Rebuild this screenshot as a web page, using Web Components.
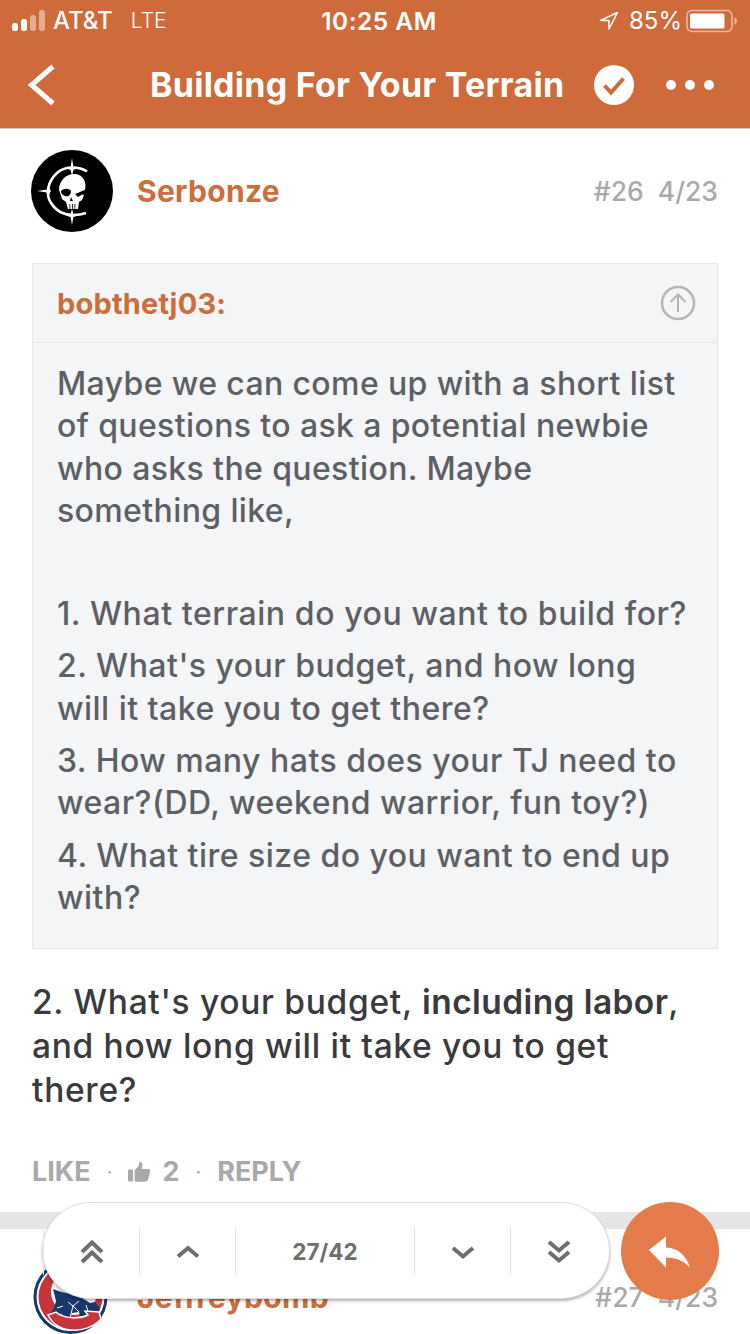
<!DOCTYPE html>
<html>
<head>
<meta charset="utf-8">
<title>Building For Your Terrain</title>
<style>
  html, body { margin: 0; padding: 0; background: #fff; }
  body { font-family: Inter, "Liberation Sans", sans-serif; }
</style>
</head>
<body>

<topic-screen>
  <topic-header slot="header" title="Building For Your Terrain"></topic-header>

  <forum-post name="Serbonze" number="#26" date="4/23">
    <skull-avatar slot="avatar"></skull-avatar>
    <post-quote user="bobthetj03:">
      <p class="intro">Maybe we can come up with a short list of questions to ask a potential newbie who asks the question. Maybe something like,</p>
      <p class="first">1. What terrain do you want to build for?</p>
      <p>2. What's your budget, and how long will it take you to get there?</p>
      <p>3. How many hats does your TJ need to wear?(DD, weekend warrior, fun toy?)</p>
      <p>4. What tire size do you want to end up with?</p>
    </post-quote>
    <post-text>2. What's your budget, <b>including labor</b>, <span>and how long will it take you to get there?</span></post-text>
    <post-actions likes="2"></post-actions>
  </forum-post>

  <forum-post class="next" name="Jeffreybomb" number="#27" date="4/23">
    <cubs-avatar slot="avatar"></cubs-avatar>
  </forum-post>

  <topic-progress slot="overlay" current="27/42"></topic-progress>
  <reply-fab slot="overlay"></reply-fab>
</topic-screen>

<script>
class TopicScreen extends HTMLElement {
  constructor() {
    super();
    this.attachShadow({ mode: "open" });
    this.shadowRoot.innerHTML = `
      <style>
        :host {
          display: block;
          position: relative;
          width: 750px;
          height: 1334px;
          overflow: hidden;
          background: #fff;
        }
        .overlay {
          position: absolute;
          left: 42px;
          top: 1202px;
          display: flex;
          gap: 11px;
        }
      </style>
      <slot name="header"></slot>
      <slot></slot>
      <div class="overlay"><slot name="overlay"></slot></div>
    `;
  }
}

class TopicHeader extends HTMLElement {
  constructor() {
    super();
    this.attachShadow({ mode: "open" });
  }

  connectedCallback() {
    const title = this.getAttribute("title") || "";
    this.shadowRoot.innerHTML = `
      <style>
        :host {
          display: block;
          height: 128px;
          background: #cf6a3b;
          border-bottom: 1px solid #c9c9c9;
          color: #fff;
          font-family: Inter, "Liberation Sans", sans-serif;
        }
        .status {
          display: grid;
          grid-template-columns: 1fr auto 1fr;
          align-items: center;
          height: 41px;
          padding: 0 12px;
          font-size: 24px;
        }
        .left, .right { display: flex; align-items: center; }
        .right { justify-content: flex-end; }
        .carrier { margin-left: 8px; font-weight: 500; }
        .lte { margin-left: 18px; font-size: 21px; font-weight: 300; }
        .time { margin-left: 8px; font-size: 24.500px; font-weight: 600; letter-spacing: .5px; }
        .pct { margin: 0 4px 0 10px; font-weight: 400; }
        .nav {
          display: flex;
          align-items: center;
          height: 87px;
          padding-left: 28px;
        }
        h1 {
          margin: 0 0 0 93px;
          font-size: 34px;
          font-weight: 700;
          white-space: nowrap;
          letter-spacing: .25px;
        }
        .check { margin-left: 30px; }
        .dots { margin-left: 31px; }
        svg { display: block; flex: none; }
      </style>
      <div class="status">
        <div class="left">
          <svg width="33" height="22" viewBox="0 0 33 22" fill="#fff">
            <rect x="0" y="13" width="6" height="8" rx="2.500"/>
            <rect x="9" y="9" width="6" height="12" rx="2.500"/>
            <rect x="18" y="5" width="6" height="16" rx="2.500" opacity=".45"/>
            <rect x="27" y="0" width="6" height="21" rx="2.500" opacity=".45"/>
          </svg>
          <span class="carrier">AT&amp;T</span>
          <span class="lte">LTE</span>
        </div>
        <div class="time">10:25 AM</div>
        <div class="right">
          <svg width="20" height="20" viewBox="0 0 20 20" fill="none" stroke="#fff" stroke-width="1.600" stroke-linejoin="round">
            <path d="M18.500 1.500 1.500 9.500h8.500v8.500z"/>
          </svg>
          <span class="pct">85%</span>
          <svg width="52" height="24" viewBox="0 0 52 24">
            <rect x="1" y="1.500" width="45" height="21" rx="5" fill="none" stroke="#fff" stroke-opacity=".55" stroke-width="1.500"/>
            <rect x="4" y="4.500" width="34.500" height="15" rx="1.500" fill="#fff"/>
            <path d="M48.500 8.500c1.600.4 2.500 1.800 2.500 3.500s-.9 3.100-2.500 3.500z" fill="#fff" fill-opacity=".55"/>
          </svg>
        </div>
      </div>
      <div class="nav">
        <svg width="29" height="42" viewBox="0 0 29 42" fill="none" stroke="#fff" stroke-width="5">
          <path d="M25 2.500 3.500 21 25 39.500"/>
        </svg>
        <h1>${title}</h1>
        <svg class="check" width="40" height="40" viewBox="0 0 40 40">
          <circle cx="20" cy="20" r="20" fill="#fff"/>
          <path d="M10.500 20.500 17 27.500 29.500 13.500" fill="none" stroke="#cf6a3b" stroke-width="4"/>
        </svg>
        <svg class="dots" width="50" height="12" viewBox="0 0 50 12" fill="#fff">
          <circle cx="6" cy="6" r="5"/>
          <circle cx="25" cy="6" r="5"/>
          <circle cx="44" cy="6" r="5"/>
        </svg>
      </div>
    `;
  }
}

class ForumPost extends HTMLElement {
  constructor() {
    super();
    this.attachShadow({ mode: "open" });
  }

  connectedCallback() {
    this.shadowRoot.innerHTML = `
      <style>
        :host {
          display: block;
          padding: 21px 32px 0;
          font-family: Inter, "Liberation Sans", sans-serif;
        }
        :host(.next) {
          border-top: 17px solid #e6e6e6;
          padding-top: 27px;
        }
        .head {
          display: flex;
          align-items: center;
          height: 82px;
        }
        .name {
          margin-left: 23px;
          color: #cc6d3c;
          font-size: 30px;
          font-weight: 700;
          letter-spacing: .3px;
        }
        .meta {
          margin-left: auto;
          color: #a9a9a9;
          font-size: 26.500px;
          font-weight: 500;
          white-space: pre;
        }
      </style>
      <div class="head">
        <slot name="avatar"></slot>
        <span class="name">${this.getAttribute("name")}</span>
        <span class="meta">${this.getAttribute("number")}  ${this.getAttribute("date")}</span>
      </div>
      <slot></slot>
    `;
  }
}

class SkullAvatar extends HTMLElement {
  constructor() {
    super();
    this.attachShadow({ mode: "open" });
    this.shadowRoot.innerHTML = `
      <style>
        :host { display: block; width: 82px; height: 82px; flex: none; margin: 0 1px 0 -1px; }
        svg { display: block; }
      </style>
      <svg width="82" height="82" viewBox="0 0 82 82">
        <circle cx="41" cy="41" r="41" fill="#000"/>
        <path d="M56 21.500C49 17 35 15 26 23 17 31 14 44 20 53c5 8 13 12 22 12 5 0 9-.5 13-2" fill="none" stroke="#fff" stroke-width="2.600"/>
        <path d="M41 8l1.400 9 4 1.500-4 1.500L41 26l-1.400-6-4-1.500 4-1.500z" fill="#fff"/>
        <path d="M6 41l10-1.400 1.500-4 1.500 4 1 1.400-1 1.400-1.500 4-1.500-4z" fill="#fff"/>
        <path d="M41 75l-1.400-8-5-1.500 5-1.500L41 59l1.400 5 5 1.500-5 1.500z" fill="#fff"/>
        <path d="M28 40C28 30 36 23 45 24 52 25 56 32 54 40L48 43 53 45 51 50 48 52 47 59H37L35 52 31 49Z" fill="#fff"/>
        <path d="M30 41C33 38 38 38 40 41 40 45 37 47 34 46 32 45 30 44 30 41Z" fill="#000"/>
        <path d="M44 44 54 40 52 44 47 47Z" fill="#000"/>
        <path d="M40 47l2 4h-3z" fill="#000"/>
        <path d="M38.500 54h.8v5h-.8zM41 54h.8v5h-.8zM43.500 54h.8v5h-.8z" fill="#000"/>
      </svg>
    `;
  }
}

class CubsAvatar extends HTMLElement {
  constructor() {
    super();
    this.attachShadow({ mode: "open" });
    this.shadowRoot.innerHTML = `
      <style>
        :host { display: block; width: 82px; height: 82px; flex: none; }
        svg { display: block; overflow: visible; }
      </style>
      <svg width="82" height="82" viewBox="0 0 82 82">
        <g transform="translate(0 2)">
          <circle cx="38.500" cy="39" r="37" fill="#16386a"/>
          <circle cx="38.500" cy="39" r="34" fill="#fff"/>
          <circle cx="38.500" cy="39" r="32" fill="#c8343c"/>
          <circle cx="42" cy="34" r="23" fill="#fff"/>
          <path d="M21 31C26 33 33 35 38 36L50 40 58 45 63 44 68 50 66 54 59 55 54 59 48 58 47 54 40 55 38 60 31 60 30 55 23 57 17 58 22 50 24 43Z" fill="#16386a"/>
          <path d="M36 44 41 48 38 60M47 43 41 48 47 54M54 47 56 53M25 50 31 48" fill="none" stroke="#fff" stroke-width="1"/>
          <path d="M16 57 24 54C30 60 46 62 56 57L53 53 67 54 69 61C62 69 50 73 39 72 28 71 20 65 16 57Z" fill="#c8343c" stroke="#fff" stroke-width="1.500"/>
        </g>
      </svg>
    `;
  }
}

class PostQuote extends HTMLElement {
  constructor() {
    super();
    this.attachShadow({ mode: "open" });
  }

  connectedCallback() {
    this.shadowRoot.innerHTML = `
      <style>
        :host {
          display: block;
          margin-top: 31px;
          background: #f4f5f7;
          border: 1px solid #e6e7e9;
          font-family: Inter, "Liberation Sans", sans-serif;
        }
        .title {
          display: flex;
          align-items: center;
          justify-content: space-between;
          height: 78px;
          padding: 0 21px 0 24px;
          border-bottom: 1px solid #e6e7e9;
          color: #cc6d3c;
          font-size: 29px;
          font-weight: 700;
          letter-spacing: .2px;
        }
        .body {
          padding: 20px 28px 28.500px 24px;
          color: #5c5f63;
          font-size: 32px;
          font-weight: 500;
          letter-spacing: .48px;
          line-height: 42.300px;
        }
        svg { display: block; }
        ::slotted(p) { margin: 10px 0 0; }
        ::slotted(p.intro) { margin-top: 0; letter-spacing: .38px; }
        ::slotted(p.first) { margin-top: 61px; letter-spacing: .58px; }
      </style>
      <div class="title">
        <span>${this.getAttribute("user")}</span>
        <svg width="36" height="36" viewBox="0 0 36 36" fill="none" stroke="#b4b5b7" stroke-width="2.500">
          <circle cx="18" cy="18" r="16"/>
          <path d="M18 27V10M10.500 17 18 9.500 25.500 17" stroke-width="2"/>
        </svg>
      </div>
      <div class="body"><slot></slot></div>
    `;
  }
}

class PostText extends HTMLElement {
  constructor() {
    super();
    this.attachShadow({ mode: "open" });
    this.shadowRoot.innerHTML = `
      <style>
        :host {
          display: block;
          margin: 31px 20px 0 0;
          color: #3a3a3c;
          font-size: 33.500px;
          font-weight: 500;
          letter-spacing: .7px;
          line-height: 44px;
        }
        ::slotted(b) { font-weight: 600; letter-spacing: .4px; }
      </style>
      <slot></slot>
    `;
  }
}

class PostActions extends HTMLElement {
  constructor() {
    super();
    this.attachShadow({ mode: "open" });
  }

  connectedCallback() {
    this.shadowRoot.innerHTML = `
      <style>
        :host {
          display: flex;
          align-items: center;
          height: 40px;
          margin-top: 40px;
          margin-bottom: 20px;
          color: #a9a9a9;
          font-size: 27px;
          font-weight: 700;
        }
        .sep { margin: 0 16px; font-weight: 400; font-size: 20px; }
        .count { margin-left: 12px; }
        svg { display: block; }
      </style>
      <span>LIKE</span>
      <span class="sep">·</span>
      <svg width="22" height="20" viewBox="0 0 22 20" fill="#a9a9a9">
        <rect x="0" y="7.500" width="5" height="12" rx="1"/>
        <path d="M6.500 8.500 11 3.500V1c0-1 2.500-1.200 3.200.8.500 1.500.1 3.500-.7 5.200h6.500c2 0 2.500 2 2 3.500l-2 7c-.4 1.300-1.500 2.300-3 2.300H9c-1.500 0-2.500-.7-2.500-2z"/>
      </svg>
      <span class="count">${this.getAttribute("likes")}</span>
      <span class="sep">·</span>
      <span>REPLY</span>
    `;
  }
}

class TopicProgress extends HTMLElement {
  constructor() {
    super();
    this.attachShadow({ mode: "open" });
  }

  icon(d) {
    return `<svg width="28" height="28" viewBox="0 0 28 28" fill="none" stroke="#6e6e6e" stroke-width="4"><path d="${d}"/></svg>`;
  }

  connectedCallback() {
    this.shadowRoot.innerHTML = `
      <style>
        :host {
          display: flex;
          align-items: center;
          box-sizing: border-box;
          width: 568px;
          height: 97px;
          background: #fff;
          border: 1px solid #dedede;
          border-radius: 49px;
          box-shadow: 0 2px 3px rgba(0, 0, 0, .3);
          font-family: Inter, "Liberation Sans", sans-serif;
        }
        .cell {
          display: flex;
          align-items: center;
          justify-content: center;
          height: 48px;
          border-left: 1px solid #e4e4e4;
          width: 95px;
        }
        .cell:first-child { border-left: 0; width: 98px; }
        .cell:last-child { width: 96px; }
        .count {
          width: 178px;
          padding-top: 2px;
          height: 46px;
          color: #6e6e6e;
          font-size: 22.500px;
          font-weight: 700;
        }
      </style>
      <div class="cell">${this.icon("M4 15 14 5.500 24 15M4 25 14 15.500 24 25")}</div>
      <div class="cell">${this.icon("M4 19.500 14 11 24 19.500")}</div>
      <div class="cell count">${this.getAttribute("current")}</div>
      <div class="cell">${this.icon("M4 11 14 19.500 24 11")}</div>
      <div class="cell">${this.icon("M4 5 14 13.500 24 5M4 15 14 23.500 24 15")}</div>
    `;
  }
}

class ReplyFab extends HTMLElement {
  constructor() {
    super();
    this.attachShadow({ mode: "open" });
    this.shadowRoot.innerHTML = `
      <style>
        :host {
          display: flex;
          align-items: center;
          justify-content: center;
          width: 98px;
          height: 98px;
          border-radius: 50%;
          background: #e57b4b;
        }
        svg { display: block; }
      </style>
      <svg width="44" height="34" viewBox="0 0 44 34" fill="#fff">
        <path d="M1 16 18 2.500V13.500C31 14 38 22 42 33.500 36 27 28 23.500 18 23.500V33.500Z"/>
      </svg>
    `;
  }
}

customElements.define("topic-screen", TopicScreen);
customElements.define("topic-header", TopicHeader);
customElements.define("forum-post", ForumPost);
customElements.define("skull-avatar", SkullAvatar);
customElements.define("cubs-avatar", CubsAvatar);
customElements.define("post-quote", PostQuote);
customElements.define("post-text", PostText);
customElements.define("post-actions", PostActions);
customElements.define("topic-progress", TopicProgress);
customElements.define("reply-fab", ReplyFab);
</script>
</body>
</html>
